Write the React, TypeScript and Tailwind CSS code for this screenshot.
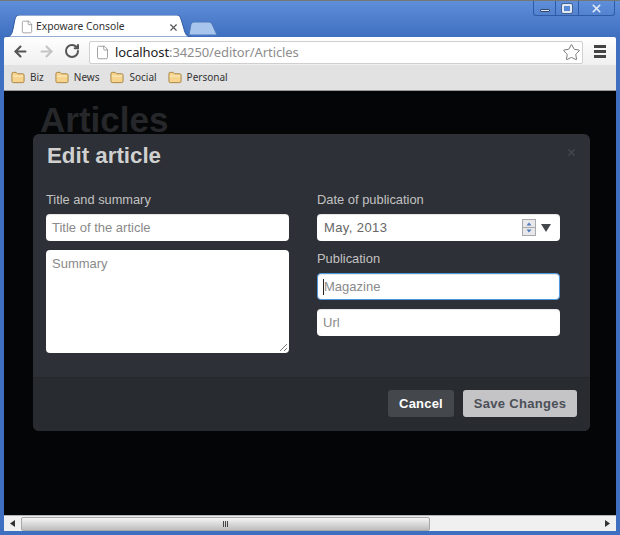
import React from "react";
import { ArrowLeft, ArrowRight, RotateCw, File, Star, X } from "lucide-react";

function Bookmark({ label }: { label: string }) {
  return (
    <div className="flex items-center gap-[5px]">
      <svg width="14" height="13" viewBox="0 0 15 13">
        <path d="M1 2.5 Q1 1 2.5 1 H5.5 L7 2.5 H12.5 Q14 2.5 14 4 V10.5 Q14 12 12.5 12 H2.5 Q1 12 1 10.5 Z" fill="#f7d48e" stroke="#a5823f" strokeWidth="1" />
        <path d="M2 5 H13" stroke="#fdeecb" strokeWidth="1" />
      </svg>
      <span className="text-[10px] text-[#333]">{label}</span>
    </div>
  );
}

const fieldCls =
  "h-[27px] w-full bg-white rounded-[4px] px-[6px] flex items-center text-[13px] text-[#8a8a8a] shadow-[inset_0_1px_1px_rgba(0,0,0,0.1)]";

export default function App() {
  return (
    <div
      className="w-[620px] h-[535px] flex flex-col overflow-hidden bg-[#3f6fc0] px-[4px] pb-[4px] border-t border-[#777] relative"
      style={{ fontFamily: '"Liberation Sans", Arial, sans-serif' }}
    >
      {/* Title bar */}
      <div className="h-[36px] shrink-0 -mx-[4px] px-[4px] bg-gradient-to-b from-[#5f8fd9] to-[#3f6fc0] flex items-end relative">
        <div className="relative w-[186px] h-[22px] ml-[1px]">
          <svg className="absolute left-0 top-0" width="186" height="22" viewBox="0 0 186 22">
            <path d="M0 22 C6 22 7 19 8 14 L10 4 C11 1 12 0 16 0 H170 C174 0 175 1 176 4 L179 14 C180 19 182 22 186 22 Z" fill="#ffffff" stroke="#2f5aa5" strokeWidth="1" />
          </svg>
          <div className="relative flex items-center h-full pl-[15px] pr-[12px] pt-[2px]">
            <File size={14} strokeWidth={1.25} className="text-[#888]" />
            <span className="ml-[2px] text-[10.3px] text-[#333] flex-1 whitespace-nowrap" style={{ fontFamily: '"Noto Sans", sans-serif' }}>Expoware Console</span>
            <X size={11} strokeWidth={2.5} className="text-[#555]" />
          </div>
        </div>
        <svg className="ml-[-3px] mb-[1px]" width="30" height="15" viewBox="0 0 30 15">
          <path d="M1 14 L3 3 Q3.5 1 6 1 H21 Q23 1 24 3 L29 14 Z" fill="#a8c5ee" stroke="#4f78bb" strokeWidth="1" />
        </svg>
        {/* Window controls */}
        <div className="absolute right-[5px] top-0 h-[15px] w-[82px] flex rounded-b-[3px] border border-t-0 border-[#2f5aa5]">
          <div className="w-[22px] border-r border-[#2f5aa5] flex items-center justify-center">
            <div className="w-[10px] h-[3px] mt-[4px] bg-[#dfe8f5] border border-[#33466b] rounded-[1px]" />
          </div>
          <div className="w-[23px] border-r border-[#2f5aa5] flex items-center justify-center">
            <div className="w-[10px] h-[9px] border-2 border-[#dfe8f5] outline outline-1 outline-[#4a6390] rounded-[1px]" />
          </div>
          <div className="flex-1 flex items-center justify-center">
            <X size={13} strokeWidth={3} className="text-[#e4ecf7]" />
          </div>
        </div>
      </div>

      {/* Toolbar */}
      <div className="h-[28px] shrink-0 bg-gradient-to-b from-[#ffffff] to-[#f0f0f0] flex items-center pl-[8px] pr-[10px] rounded-t-[2px]">
        <ArrowLeft size={17} strokeWidth={3} className="text-[#555]" />
        <ArrowRight size={17} strokeWidth={3} className="text-[#c4c4c4] ml-[9px]" />
        <RotateCw size={16} strokeWidth={3} className="text-[#555] ml-[9px]" />
        <div className="ml-[9px] flex-1 h-[23px] mt-[2px] bg-white border border-[#cfcfcf] rounded-[2px] flex items-center pl-[5px] pr-[1px]">
          <File size={15} strokeWidth={1.25} className="text-[#888]" />
          <span className="ml-[5px] pt-[1px] text-[13px] text-[#222]" style={{ fontFamily: '"Noto Sans", sans-serif', letterSpacing: "-0.1px" }}>
            localhost<span className="text-[#8d8d8d]">:34250/editor/Articles</span>
          </span>
          <Star size={19} strokeWidth={1.25} className="text-[#777] ml-auto" />
        </div>
        <div className="ml-[11px] w-[12px] flex flex-col gap-[2px]">
          <div className="h-[3px] bg-[#444]" />
          <div className="h-[3px] bg-[#444]" />
          <div className="h-[3px] bg-[#444]" />
        </div>
      </div>

      {/* Bookmarks */}
      <div className="h-[26px] shrink-0 bg-[#e2e2e2] border-b border-[#9a9a9a] flex items-center gap-[11px] pl-[7px]" style={{ fontFamily: '"Noto Sans", sans-serif' }}>
        <Bookmark label="Biz" />
        <Bookmark label="News" />
        <Bookmark label="Social" />
        <Bookmark label="Personal" />
      </div>

      {/* Page */}
      <div className="flex-1 bg-[#040507] relative pl-[36px] overflow-hidden">
        <h1 className="text-[35px] leading-[40px] mt-[9px] font-bold text-[#26272a]">Articles</h1>

        <div className="absolute left-[29px] top-[43px] w-[557px] h-[297px] bg-[#2d3036] rounded-[6px] flex flex-col">
          <div className="h-[46px] shrink-0 flex items-center justify-between pl-[14px] pr-[13px]">
            <h3 className="text-[22.3px] leading-[30px] font-bold text-[#d0d0d0] mt-[-2px]">Edit article</h3>
            <X size={11} strokeWidth={3} className="text-[#44474c] mt-[-9px]" />
          </div>
          <div className="flex-1 grid grid-cols-[243px_243px] gap-x-[28px] pl-[13px] pt-[11px]">
            <div className="flex flex-col">
              <label className="text-[12.8px] leading-[18px] text-[#c2c2c2]">Title and summary</label>
              <div className={`${fieldCls} mt-[5px]`}>Title of the article</div>
              <div className="relative mt-[9px] h-[103px] bg-white rounded-[4px] px-[6px] py-[5px] text-[13px] leading-[18px] text-[#8a8a8a]">
                Summary
                <svg className="absolute right-[1px] bottom-[1px]" width="9" height="9" viewBox="0 0 9 9">
                  <path d="M1 8 L8 1 M5 8 L8 5" stroke="#777" strokeWidth="1" />
                </svg>
              </div>
            </div>
            <div className="flex flex-col">
              <label className="text-[12.9px] leading-[18px] text-[#c2c2c2]">Date of publication</label>
              <div className={`${fieldCls} mt-[5px] justify-between !text-[#666] !pl-[7px]`}>
                <span className="tracking-[0.4px]">May, 2013</span>
                <div className="flex items-center gap-[5px] pr-[3px]">
                  <svg width="14" height="17" viewBox="0 0 14 17">
                    <rect x="0.5" y="0.5" width="13" height="16" fill="#e8e8ea" stroke="#a9a9ad" />
                    <path d="M0.5 8.5 H13.5" stroke="#a9a9ad" />
                    <path d="M7 3.5 L9.5 6.5 H4.5 Z" fill="#4f78bb" />
                    <path d="M7 13.5 L9.5 10.5 H4.5 Z" fill="#4f78bb" />
                  </svg>
                  <svg width="10" height="8" viewBox="0 0 10 8">
                    <path d="M0 0 H10 L5 8 Z" fill="#44474c" />
                  </svg>
                </div>
              </div>
              <label className="mt-[9px] text-[12.9px] leading-[18px] text-[#c2c2c2]">Publication</label>
              <div className={`${fieldCls} mt-[5px] shadow-[0_0_7px_rgba(82,168,236,0.9)] border border-[#4d98dd] !px-[5px]`}>
                <span className="w-px h-[16px] bg-[#222]" />
                <span>Magazine</span>
              </div>
              <div className={`${fieldCls} mt-[9px]`}>Url</div>
            </div>
          </div>
          <div className="h-[54px] shrink-0 bg-[#282b2f] border-t border-[#25272b] rounded-b-[6px] flex items-center justify-end gap-[9px] pr-[13px] pb-[2px]">
            <button className="h-[27px] w-[66px] rounded-[3px] bg-[#44474c] text-[13px] font-bold text-white tracking-[0.2px]">Cancel</button>
            <button className="h-[27px] w-[114px] rounded-[3px] bg-[#c4c4c6] text-[13px] font-bold text-[#4b4f58] tracking-[0.3px]">Save Changes</button>
          </div>
        </div>
      </div>

      {/* Scrollbar */}
      <div className="h-[16px] shrink-0 bg-[#f0f0f0] border-t border-[#b5b5b5] flex items-center">
        <svg className="ml-[6px]" width="5" height="7" viewBox="0 0 5 7"><path d="M5 0 V7 L0 3.5 Z" fill="#333" /></svg>
        <div className="ml-[6px] w-[409px] h-[14px] rounded-[2px] border border-[#a8a8a8] bg-gradient-to-b from-[#f5f5f5] to-[#bdbdbd] flex items-center justify-center">
          <div className="flex gap-[1px]">
            <div className="w-px h-[6px] bg-[#444]" />
            <div className="w-px h-[6px] bg-[#444]" />
            <div className="w-px h-[6px] bg-[#444]" />
          </div>
        </div>
        <svg className="ml-auto mr-[6px]" width="5" height="7" viewBox="0 0 5 7"><path d="M0 0 V7 L5 3.5 Z" fill="#333" /></svg>
      </div>
    </div>
  );
}
